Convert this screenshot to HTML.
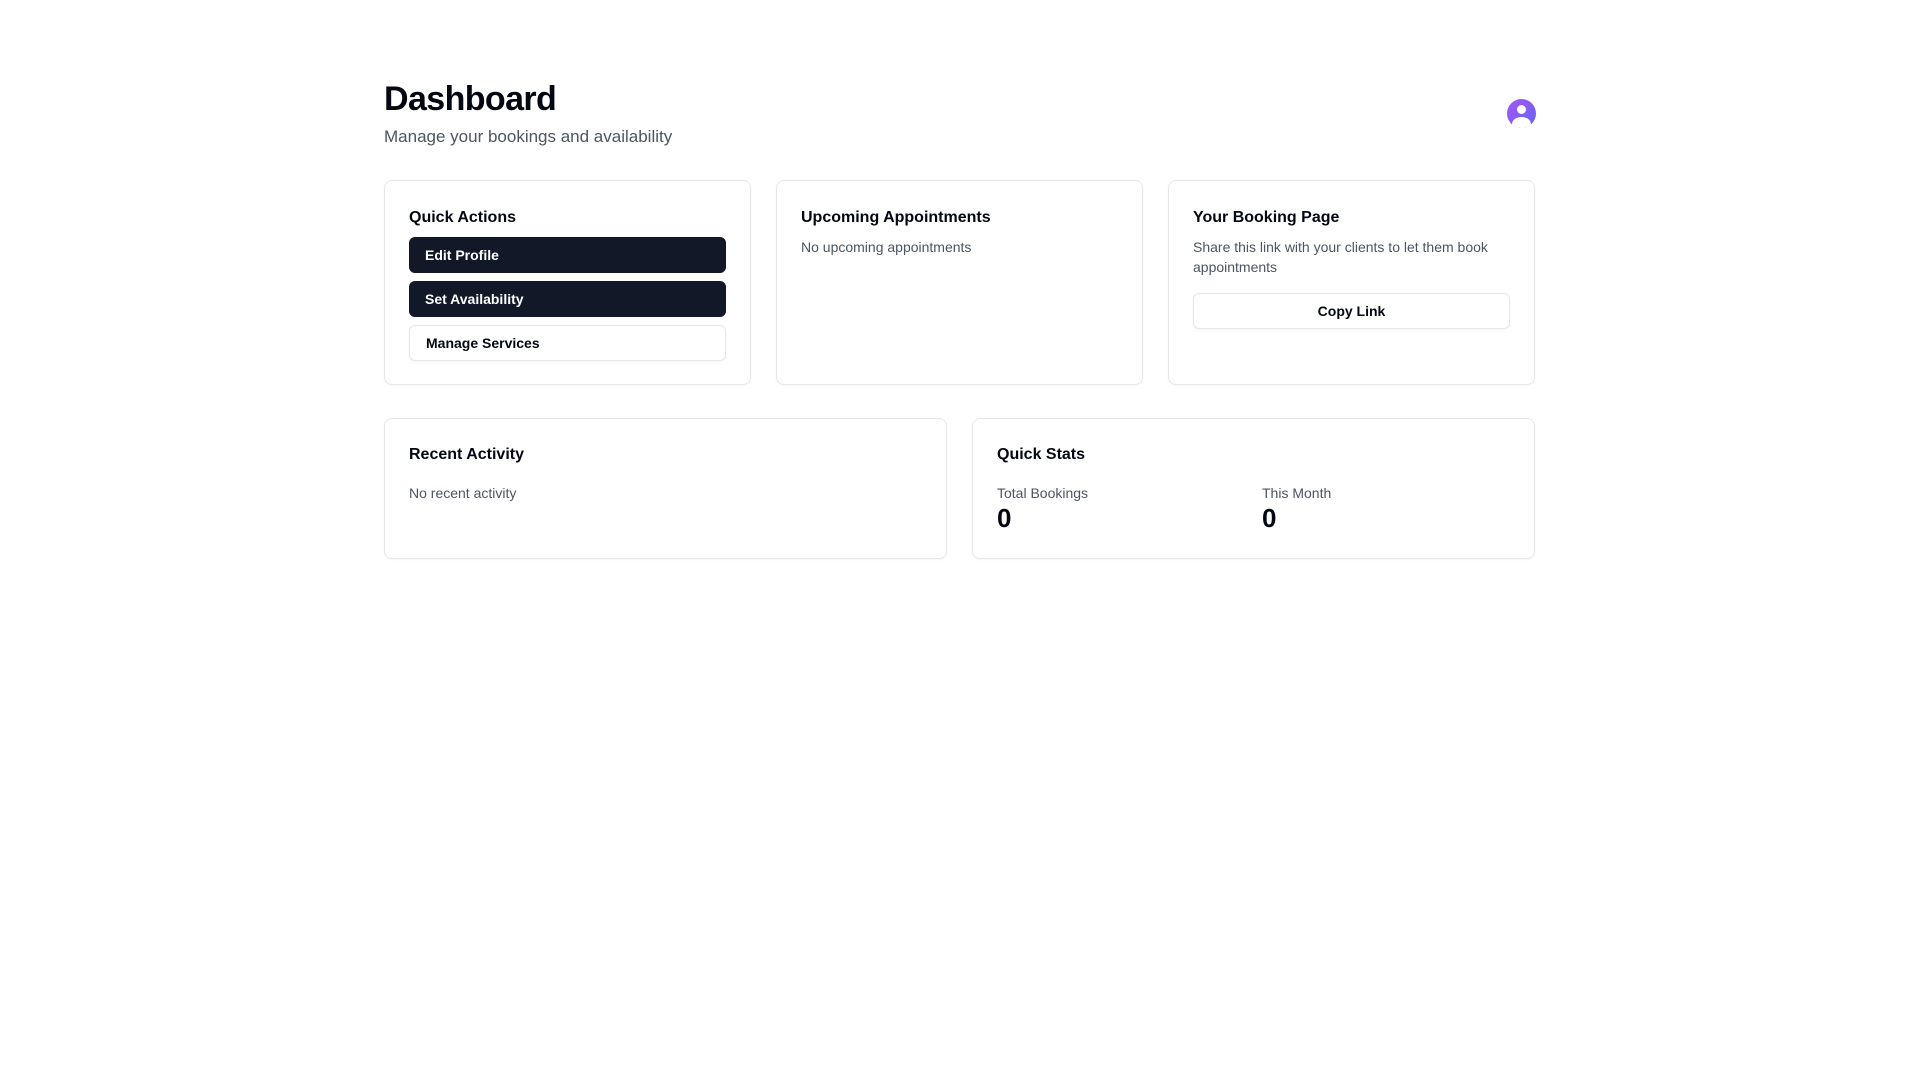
<!DOCTYPE html>
<html><head><style>
*{box-sizing:border-box;margin:0;padding:0}
body{width:1920px;height:1080px;background:#fff;font-family:"Liberation Sans",sans-serif;color:#030712;position:relative}
.abs{position:absolute}
h1{position:absolute;left:384px;top:77px;font-size:34px;font-weight:700;line-height:44px;letter-spacing:-0.6px}
.sub{left:384px;top:125px;font-size:17px;line-height:24px;color:#4b5563}
.card{position:absolute;border:1px solid #e5e7eb;border-radius:8px;background:#fff;box-shadow:0 1px 2px rgba(0,0,0,.04)}
.t{position:absolute;left:24px;font-size:16px;font-weight:700;line-height:24px}
.p{position:absolute;left:24px;font-size:14px;line-height:20px;color:#4b5563}
.btn{position:absolute;left:24px;right:24px;height:36px;border-radius:6px;font-size:14px;font-weight:700;line-height:36px;padding-left:16px}
.dark{background:#111827;color:#fff}
.light{border:1px solid #e5e7eb;color:#030712;line-height:34px;box-shadow:0 1px 2px rgba(0,0,0,.05)}
.num{position:absolute;font-size:26px;font-weight:700;line-height:32px}
</style></head><body>
<h1>Dashboard</h1>
<div class="abs sub">Manage your bookings and availability</div>
<div class="abs" style="left:1507px;top:99px;width:29px;height:29px;border-radius:50%;background:linear-gradient(135deg,#a855f7,#6366f1);overflow:hidden">
<div class="abs" style="left:10px;top:6px;width:9px;height:9px;border-radius:50%;background:#fff"></div>
<div class="abs" style="left:5px;top:18px;width:19px;height:14px;border-radius:50%;background:#fff"></div>
</div>

<div class="card" style="left:384px;top:180px;width:367px;height:205px">
<div class="t" style="top:25px">Quick Actions</div>
<div class="btn dark" style="top:56px">Edit Profile</div>
<div class="btn dark" style="top:100px">Set Availability</div>
<div class="btn light" style="top:144px">Manage Services</div>
</div>
<div class="card" style="left:776px;top:180px;width:367px;height:205px">
<div class="t" style="top:25px">Upcoming Appointments</div>
<div class="p" style="top:56px">No upcoming appointments</div>
</div>
<div class="card" style="left:1168px;top:180px;width:367px;height:205px">
<div class="t" style="top:25px">Your Booking Page</div>
<div class="p" style="top:56px;right:24px">Share this link with your clients to let them book appointments</div>
<div class="btn light" style="top:112px;padding-left:0;text-align:center">Copy Link</div>
</div>

<div class="card" style="left:384px;top:418px;width:563px;height:141px">
<div class="t" style="top:24px">Recent Activity</div>
<div class="p" style="top:64px">No recent activity</div>
</div>
<div class="card" style="left:972px;top:418px;width:563px;height:141px">
<div class="t" style="top:24px">Quick Stats</div>
<div class="p" style="top:64px">Total Bookings</div>
<div class="num" style="left:24px;top:83px">0</div>
<div class="p" style="top:64px;left:289px">This Month</div>
<div class="num" style="left:289px;top:83px">0</div>
</div>
</body></html>
